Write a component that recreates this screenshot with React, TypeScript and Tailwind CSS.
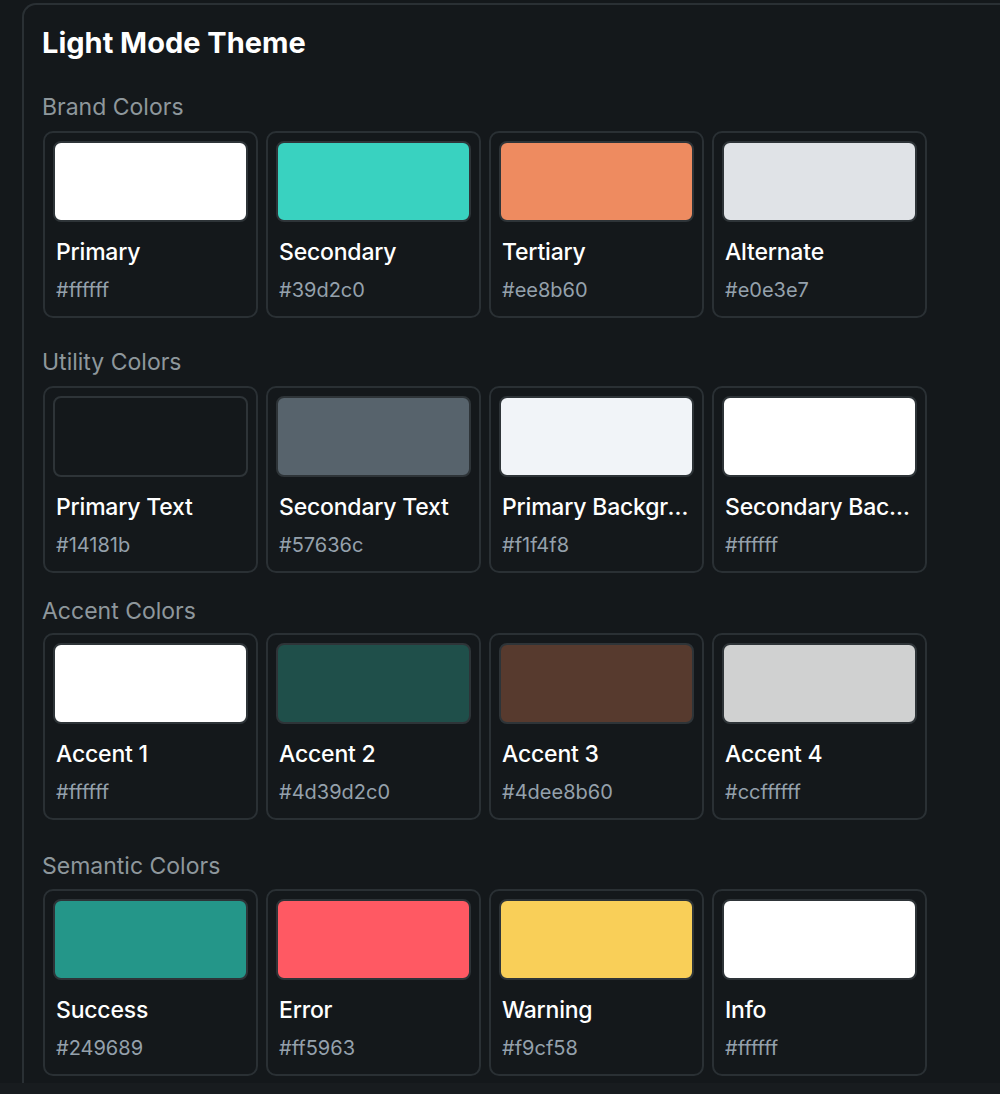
import React from "react";

type Swatch = { name: string; hex: string; color: string };

const sections: { title: string; mt: string; gap: string; items: Swatch[] }[] = [
  {
    title: "Brand Colors",
    mt: "mt-[34px]",
    gap: "mt-[10px]",
    items: [
      { name: "Primary", hex: "#ffffff", color: "#ffffff" },
      { name: "Secondary", hex: "#39d2c0", color: "#39d2c0" },
      { name: "Tertiary", hex: "#ee8b60", color: "#ee8b60" },
      { name: "Alternate", hex: "#e0e3e7", color: "#e0e3e7" },
    ],
  },
  {
    title: "Utility Colors",
    mt: "mt-[30px]",
    gap: "mt-[10px]",
    items: [
      { name: "Primary Text", hex: "#14181b", color: "#14181b" },
      { name: "Secondary Text", hex: "#57636c", color: "#57636c" },
      { name: "Primary Background", hex: "#f1f4f8", color: "#f1f4f8" },
      { name: "Secondary Background", hex: "#ffffff", color: "#ffffff" },
    ],
  },
  {
    title: "Accent Colors",
    mt: "mt-[24px]",
    gap: "mt-[8px]",
    items: [
      { name: "Accent 1", hex: "#ffffff", color: "#ffffff" },
      { name: "Accent 2", hex: "#4d39d2c0", color: "#1f4f4a" },
      { name: "Accent 3", hex: "#4dee8b60", color: "#573a2e" },
      { name: "Accent 4", hex: "#ccffffff", color: "#d0d1d1" },
    ],
  },
  {
    title: "Semantic Colors",
    mt: "mt-[32px]",
    gap: "mt-[9px]",
    items: [
      { name: "Success", hex: "#249689", color: "#249689" },
      { name: "Error", hex: "#ff5963", color: "#ff5963" },
      { name: "Warning", hex: "#f9cf58", color: "#f9cf58" },
      { name: "Info", hex: "#ffffff", color: "#ffffff" },
    ],
  },
];

const ColorCard: React.FC<{ item: Swatch }> = ({ item }) => (
  <div className="w-[215px] h-[187px] rounded-[10px] border-2 border-[#2a3034] p-[8px] flex flex-col">
    <div
      className="h-[81px] w-full rounded-[8px] border-2 border-[#2e3438]"
      style={{ backgroundColor: item.color }}
    />
    <div className="px-[3px] mt-[16px] text-[23px] leading-[28px] text-white font-medium truncate tracking-[-0.2px]">
      {item.name}
    </div>
    <div className="px-[3px] mt-[12px] text-[20px] leading-[24px] text-[#95a1ac]">{item.hex}</div>
  </div>
);

export default function App() {
  return (
    <div className="w-[1000px] h-[1094px] bg-[#14181b] overflow-hidden font-['Inter',sans-serif] flex flex-col">
      <div className="pl-[22px] pt-[3px] h-[1083px]">
        <div className="h-full border-l-2 border-t-2 border-[#2a3034] rounded-tl-[14px] pl-[18px] pt-[22px]">
          <div className="text-[29px] leading-[32px] font-bold text-white">Light Mode Theme</div>
          {sections.map((s) => (
            <div key={s.title} className={s.mt}>
              <div className="text-[23px] leading-[28px] text-[#8e979c]">{s.title}</div>
              <div className={`flex gap-[8px] ml-[1px] ${s.gap}`}>
                {s.items.map((it) => (
                  <ColorCard key={it.name} item={it} />
                ))}
              </div>
            </div>
          ))}
        </div>
      </div>
      <div className="flex-1 bg-[#181c1f]" />
    </div>
  );
}
